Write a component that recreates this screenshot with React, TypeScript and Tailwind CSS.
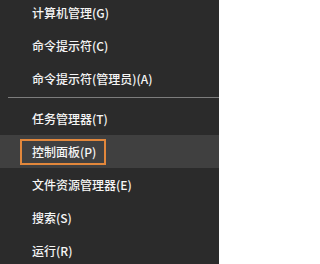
const topItems = ["计算机管理(G)", "命令提示符(C)", "命令提示符(管理员)(A)"];
const bottomItems = ["任务管理器(T)", "控制面板(P)", "文件资源管理器(E)", "搜索(S)", "运行(R)"];

const MenuItem = ({ label, active }: { label: string; active?: boolean }) => (
  <div className={`h-[33px] flex items-center ${active ? "bg-[#404040]" : ""}`}>
    {active ? (
      <div className="ml-[20px] h-[26px] w-[86px] border-2 border-[#e2873b] flex items-center pl-[10px]">
        {label}
      </div>
    ) : (
      <span className="pl-[32px]">{label}</span>
    )}
  </div>
);

export default function App() {
  return (
    <div
      className="w-[219px] h-[264px] overflow-hidden bg-[#2b2b2b] text-[12px] leading-none font-medium text-[#f5f5f5]"
      style={{ fontFamily: '"Noto Sans CJK SC", "Noto Sans", sans-serif' }}
    >
      <div className="-mt-[4px]">
        {topItems.map((t) => (
          <MenuItem key={t} label={t} />
        ))}
        <div className="mt-[2px] mb-[4px] ml-[8px] h-px bg-[#7d7d7d]" />
        {bottomItems.map((t) => (
          <MenuItem key={t} label={t} active={t === "控制面板(P)"} />
        ))}
      </div>
    </div>
  );
}
